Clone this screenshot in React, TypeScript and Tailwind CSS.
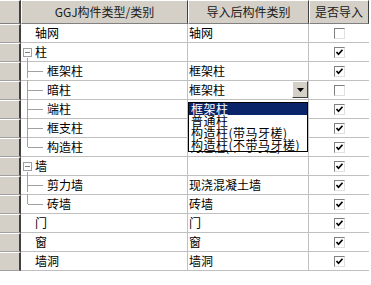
import React from 'react';

type Row = {
  name: string;
  level: 0 | 1;
  group?: boolean;
  last?: boolean;
  target: string;
  checked: boolean;
  combo?: boolean;
};

// rows 端柱 / 框支柱 sit under the open list, so their target text is not shown
const rows: Row[] = [
  { name: '轴网', level: 0, target: '轴网', checked: false },
  { name: '柱', level: 0, group: true, target: '', checked: true },
  { name: '框架柱', level: 1, target: '框架柱', checked: true },
  { name: '暗柱', level: 1, target: '框架柱', checked: false, combo: true },
  { name: '端柱', level: 1, target: '', checked: true },
  { name: '框支柱', level: 1, target: '', checked: true },
  { name: '构造柱', level: 1, last: true, target: '构造柱(带马牙槎)', checked: true },
  { name: '墙', level: 0, group: true, target: '', checked: true },
  { name: '剪力墙', level: 1, target: '现浇混凝土墙', checked: true },
  { name: '砖墙', level: 1, last: true, target: '砖墙', checked: true },
  { name: '门', level: 0, target: '门', checked: true },
  { name: '窗', level: 0, target: '窗', checked: true },
  { name: '墙洞', level: 0, target: '墙洞', checked: true },
];

const options = ['框架柱', '普通柱', '构造柱(带马牙槎)', '构造柱(不带马牙槎)'];

function CheckBox({ checked }: { checked: boolean }) {
  return (
    <div className="w-[11px] h-[11px] border-t border-l border-t-[#808080] border-l-[#808080] border-b border-r border-b-[#e0e0e0] border-r-[#e0e0e0] bg-white flex items-center justify-center">
      {checked && (
        <svg width="9" height="9" viewBox="0 0 9 9">
          <path d="M1.5 4 L3.5 6.2 L7.5 1.8" stroke="#000" strokeWidth="1.7" fill="none" />
        </svg>
      )}
    </div>
  );
}

function TreeCell({ row, index }: { row: Row; index: number }) {
  if (row.level === 0) {
    return (
      <div className="relative h-full flex items-center pl-[14px]">
        {row.group && (
          <div className="absolute left-[2px] top-[5px] w-[9px] h-[9px] border border-[#a0a0a0] bg-white flex items-center justify-center">
            <div className="w-[5px] h-px bg-[#808080]" />
          </div>
        )}
        <span>{row.name}</span>
      </div>
    );
  }
  const prev = rows[index - 1];
  return (
    <div className="relative h-full flex items-center pl-[26px]">
      <div
        className={
          'absolute left-[6px] w-px bg-[#a0a0a0] ' +
          (row.last ? 'h-[10px] ' : 'h-[20px] ') +
          (prev && prev.group ? 'top-[-4px]' : 'top-[-1px]')
        }
      />
      <div className="absolute left-[7px] top-[9px] w-[15px] h-px bg-[#a0a0a0]" />
      <span>{row.name}</span>
    </div>
  );
}

export default function App() {
  return (
    <div
      className="relative w-[371px] h-[285px] bg-white overflow-hidden text-[12px] leading-none text-black"
      style={{ fontFamily: '"Noto Sans CJK SC", "Liberation Sans", sans-serif' }}
    >
      {/* header */}
      <div className="flex h-[24px]">
        <div className="w-[21px] bg-[#d4d0c8] border-t border-t-white border-r-2 border-r-[#404040] border-b border-b-[#808080]" />
        <div className="w-[167px] bg-[#d4d0c8] border-t border-l border-t-white border-l-white border-r border-r-[#404040] border-b border-b-[#808080] flex items-center justify-center text-[#202020]">
          GGJ构件类型/类别
        </div>
        <div className="w-[121px] bg-[#d4d0c8] border-t border-l border-t-white border-l-white border-r border-r-[#404040] border-b border-b-[#808080] flex items-center justify-center text-[#202020]">
          导入后构件类别
        </div>
        <div className="w-[60px] bg-[#d4d0c8] border-t border-l border-t-white border-l-white border-r border-r-[#404040] border-b border-b-[#808080] flex items-center justify-center text-[#202020]">
          是否导入
        </div>
      </div>

      {/* body */}
      {rows.map((row, i) => (
        <div key={i} className="flex h-[19px]">
          <div className="w-[21px] bg-[#d4d0c8] border-t border-t-white border-b border-b-[#a0a0a0] border-r-2 border-r-[#404040]" />
          <div className="w-[167px] border-b border-r border-[#c0c0c0]">
            <TreeCell row={row} index={i} />
          </div>
          <div className="w-[121px] border-b border-r border-[#c0c0c0] flex items-center pl-[1px] relative">
            <span>{row.target}</span>
            {row.combo && (
              <div className="absolute right-[0px] top-[0px] w-[16px] h-[17px] bg-[#d4d0c8] border-t border-l border-t-white border-l-white border-b border-r border-b-[#404040] border-r-[#404040] flex items-center justify-center">
                <svg width="7" height="4" viewBox="0 0 7 4">
                  <path d="M0 0 H7 L3.5 4 Z" fill="#000" />
                </svg>
              </div>
            )}
          </div>
          <div className="w-[60px] border-b border-[#c0c0c0] flex items-center justify-center">
            <CheckBox checked={row.checked} />
          </div>
        </div>
      ))}

      {/* open combo list */}
      <div className="absolute left-[188px] top-[102px] w-[120px] border border-black bg-white flex flex-col">
        {options.map((o, i) => (
          <div
            key={o}
            className={
              'h-[12px] flex items-center pl-[2px] tracking-[0.5px] ' +
              (i === 0 ? 'bg-[#0a246a] text-white' : 'text-black')
            }
          >
            {o}
          </div>
        ))}
      </div>
    </div>
  );
}
